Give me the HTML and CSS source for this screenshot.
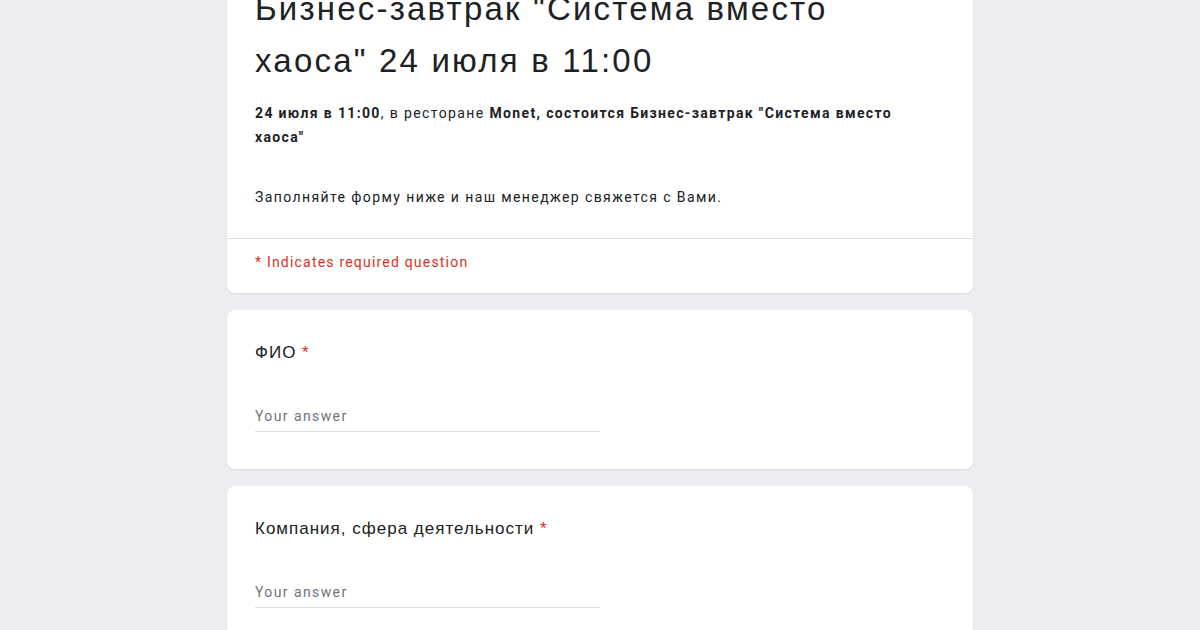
FILE: index.html
```html
<!DOCTYPE html>
<html lang="ru">
<head>
<meta charset="utf-8">
<title>Бизнес-завтрак</title>
<link rel="stylesheet" href="styles.css">
</head>
<body>
<main class="form">
  <section class="card header-card">
    <div class="header-main">
      <h1 class="title">Бизнес-завтрак "Система вместо хаоса" 24 июля в 11:00</h1>
      <p class="desc"><b>24 июля в 11:00</b>, в ресторане <b>Monet, состоится Бизнес-завтрак "Система вместо хаоса"</b></p>
      <p class="desc desc-gap">Заполняйте форму ниже и наш менеджер свяжется с Вами.</p>
    </div>
    <div class="header-foot">* Indicates required question</div>
  </section>
  <section class="card question">
    <div class="q-title">ФИО <span class="req">*</span></div>
    <div class="answer">Your answer</div>
  </section>
  <section class="card question">
    <div class="q-title">Компания, сфера деятельности <span class="req">*</span></div>
    <div class="answer">Your answer</div>
  </section>
</main>
</body>
</html>
```

FILE: styles.css
```css
html, body {
  margin: 0;
  padding: 0;
  background: #ebedf0;
  overflow: hidden;
}
body {
  font-family: Roboto, "Liberation Sans", Arial, sans-serif;
  color: #202124;
}
.form {
  width: 746px;
  margin: -37px auto 0;
  display: flex;
  flex-direction: column;
  gap: 17px;
}
.card {
  background: #fff;
  border-radius: 8px;
  box-shadow: 0 1px 2px rgba(60, 64, 67, 0.1);
}
.header-main {
  padding: 20px 28px 29px;
  border-bottom: 1px solid #dadce0;
}
.title {
  font-family: "Liberation Sans", Arial, sans-serif;
  font-weight: 400;
  font-size: 33px;
  line-height: 52px;
  letter-spacing: 2.2px;
  margin: 0 0 14px;
  color: #202124;
  width: 640px;
}
.desc {
  font-size: 14px;
  line-height: 24px;
  letter-spacing: 1.4px;
  margin: 0;
  color: #202124;
  width: 660px;
}
.desc b { font-weight: 700; letter-spacing: 1.35px; }
.desc-gap { margin-top: 36px; }
.header-foot {
  padding: 13px 28px 21px;
  font-size: 14px;
  line-height: 20px;
  letter-spacing: 1.2px;
  color: #d93025;
}
.question {
  padding: 31px 28px 37px;
}
.q-title {
  font-family: "Liberation Sans", Arial, sans-serif;
  font-size: 17px;
  line-height: 24px;
  letter-spacing: 1px;
  color: #202124;
}
.req { color: #d93025; }
.answer {
  margin-top: 41px;
  width: 345px;
  font-size: 14px;
  line-height: 20px;
  letter-spacing: 1.4px;
  color: #70757a;
  padding-bottom: 5px;
  border-bottom: 1px solid #e0e0e0;
}
```
